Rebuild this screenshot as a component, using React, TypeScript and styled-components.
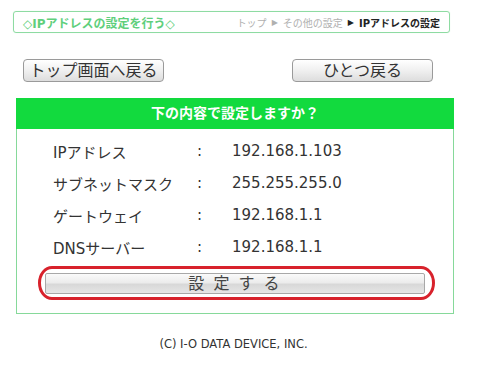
import React from 'react';
import styled, { createGlobalStyle } from 'styled-components';

const GlobalStyle = createGlobalStyle`
  html, body {
    margin: 0;
    padding: 0;
    background: #ffffff;
  }
  body {
    font-family: 'DejaVu Sans', 'Noto Sans CJK JP', sans-serif;
    color: #333333;
  }
`;

const rows = [
  { label: 'IPアドレス', value: '192.168.1.103' },
  { label: 'サブネットマスク', value: '255.255.255.0' },
  { label: 'ゲートウェイ', value: '192.168.1.1' },
  { label: 'DNSサーバー', value: '192.168.1.1' },
];

const App: React.FC = () => {
  return (
    <>
      <GlobalStyle />
      <Page>
        <TitleBar>
          <Title>◇IPアドレスの設定を行う◇</Title>
          <Crumbs>
            <Crumb>トップ</Crumb>
            <Arrow>▶</Arrow>
            <Crumb>その他の設定</Crumb>
            <Arrow $current>▶</Arrow>
            <Crumb $current>IPアドレスの設定</Crumb>
          </Crumbs>
        </TitleBar>

        <NavRow>
          <NavButton>トップ画面へ戻る</NavButton>
          <NavButton>ひとつ戻る</NavButton>
        </NavRow>

        <Panel>
          <PanelHeader>下の内容で設定しますか？</PanelHeader>
          <Rows>
            {rows.map((r) => (
              <Row key={r.label}>
                <Label>{r.label}</Label>
                <Colon>:</Colon>
                <Value>{r.value}</Value>
              </Row>
            ))}
          </Rows>
          <Highlight>
            <SubmitButton>設 定 す る</SubmitButton>
          </Highlight>
        </Panel>

        <Footer>(C) I-O DATA DEVICE, INC.</Footer>
      </Page>
    </>
  );
};

export default App;

const Page = styled.div`
  width: 441px;
  padding: 11px 0 0 13px;
`;

const TitleBar = styled.div`
  box-sizing: border-box;
  width: 437px;
  height: 22px;
  border: 1px solid #8edba2;
  border-radius: 3px;
  box-shadow: 0 0 1px #c8efd2;
  display: flex;
  align-items: center;
  justify-content: space-between;
  padding: 0 9px 0 9px;
`;

const Title = styled.span`
  font-size: 12px;
  font-weight: bold;
  color: #5fcf7c;
`;

const Crumbs = styled.div`
  display: flex;
  align-items: center;
  gap: 5px;
  font-size: 10px;
`;

const Crumb = styled.span<{ $current?: boolean }>`
  color: ${(p) => (p.$current ? '#222222' : '#b0b0b0')};
  font-weight: ${(p) => (p.$current ? 'bold' : 'normal')};
`;

const Arrow = styled.span<{ $current?: boolean }>`
  font-size: 8px;
  color: ${(p) => (p.$current ? '#222222' : '#b0b0b0')};
`;

const NavRow = styled.div`
  display: flex;
  justify-content: space-between;
  margin: 26px 21px 0 10px;
`;

const NavButton = styled.button`
  box-sizing: border-box;
  width: 141px;
  height: 23px;
  padding: 0;
  border: 1px solid #9a9a9a;
  border-radius: 4px;
  background: linear-gradient(#ffffff, #f0f0f0 50%, #dddddd);
  font-family: 'DejaVu Sans', 'Noto Sans CJK JP', sans-serif;
  font-size: 16px;
  line-height: 21px;
  color: #333333;
`;

const Panel = styled.div`
  box-sizing: border-box;
  width: 438px;
  margin: 16px 0 0 3px;
  border: 1px solid #86d99a;
  border-top: none;
  padding-bottom: 13px;
`;

const PanelHeader = styled.div`
  height: 31px;
  margin: 0 -1px;
  background: #12da3e;
  color: #ffffff;
  font-size: 14px;
  font-weight: bold;
  line-height: 31px;
  text-align: center;
`;

const Rows = styled.div`
  padding: 6px 0 0 36px;
`;

const Row = styled.div`
  display: grid;
  grid-template-columns: 144px 35px 1fr;
  height: 32px;
  align-items: center;
  font-size: 15px;
  color: #333333;
`;

const Label = styled.span``;

const Colon = styled.span``;

const Value = styled.span``;

const Highlight = styled.div`
  box-sizing: border-box;
  width: 397px;
  height: 34px;
  margin: 3px 0 0 21px;
  border: 3px solid #d8222c;
  border-radius: 14px / 50%;
  padding: 4px 7px 3px 4px;
  display: flex;
`;

const SubmitButton = styled.button`
  flex: 1;
  height: 21px;
  padding: 0;
  border: 1px solid #a8a8a8;
  border-radius: 2px;
  background: linear-gradient(#fafafa, #ececec 45%, #d8d8d8 55%, #e6e6e6);
  font-family: 'DejaVu Sans', 'Noto Sans CJK JP', sans-serif;
  font-size: 16px;
  line-height: 19px;
  color: #444444;
  letter-spacing: 2px;
`;

const Footer = styled.div`
  width: 441px;
  margin-top: 23px;
  text-align: center;
  font-size: 11.5px;
  color: #333333;
`;
